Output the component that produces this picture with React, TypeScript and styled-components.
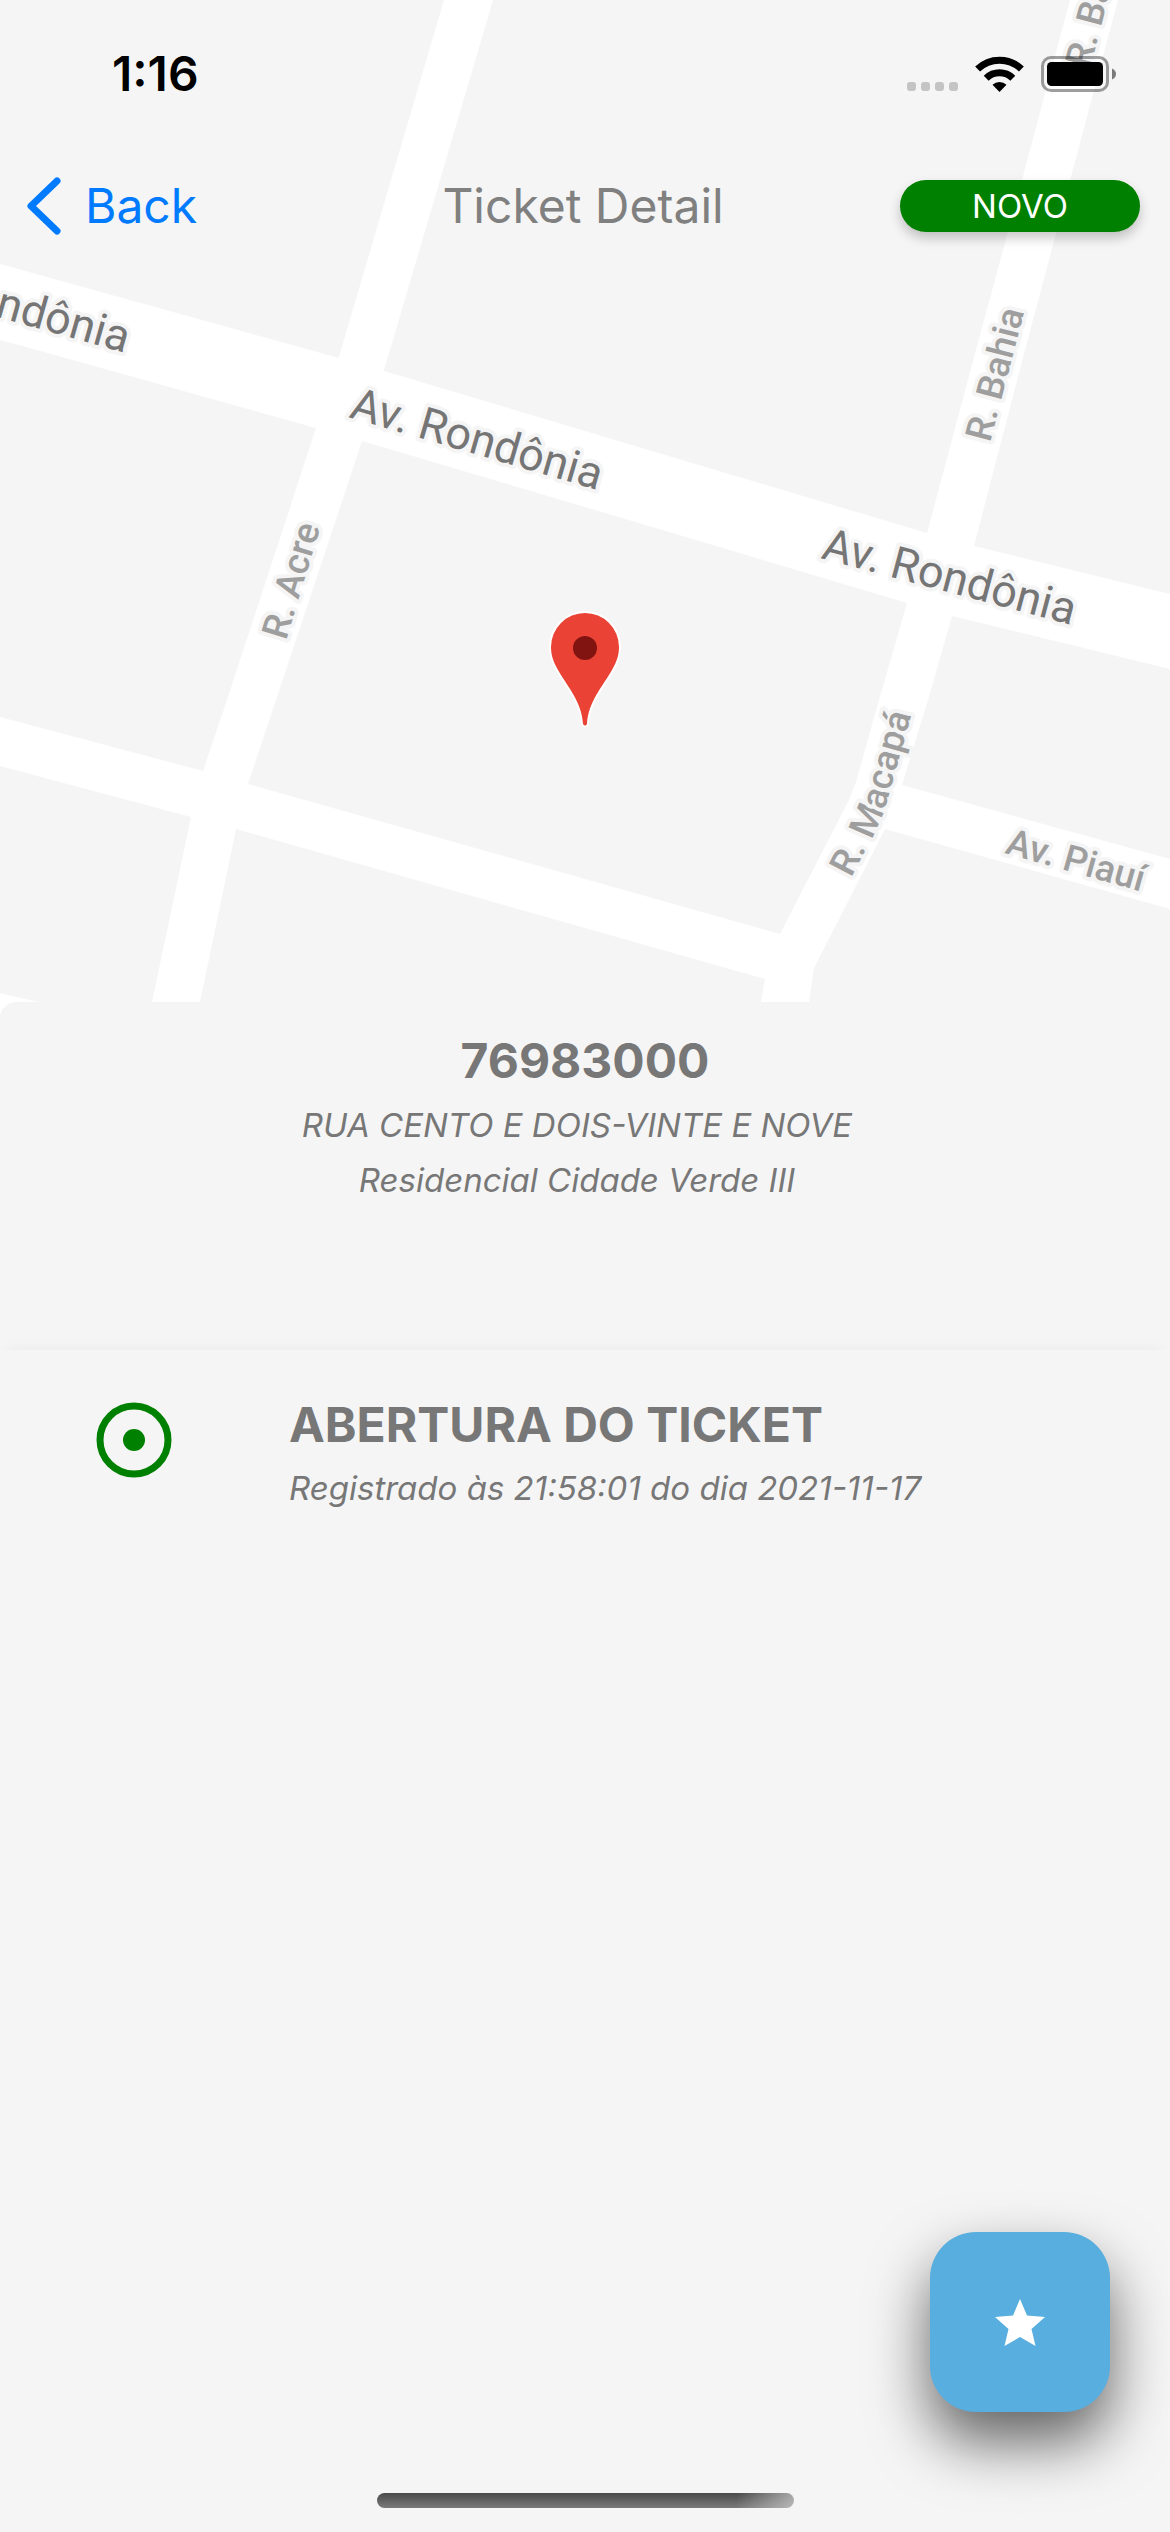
import React from "react";
import styled, { createGlobalStyle } from "styled-components";

const colors = {
  surface: "#f5f5f5",
  road: "#ffffff",
  text: "#777777",
  title: "#808080",
  link: "#007aff",
  open: "#008000",
  action: "#58aedf",
};

const GlobalStyle = createGlobalStyle`
  *, *::before, *::after { box-sizing: border-box; }
  html, body { margin: 0; background: ${colors.surface}; }
  body { font-family: Inter, "Liberation Sans", sans-serif; color: ${colors.text}; }
  h1, h2, h3, p, ul { margin: 0; padding: 0; }
`;

const Screen = styled.div`
  position: relative;
  display: flex;
  flex-direction: column;
  min-height: 100vh;
  overflow: hidden;
  background: ${colors.surface};
`;

const MapArea = styled.header`
  position: relative;
  min-height: 1020px;
`;

const MapCanvas = styled.svg`
  position: absolute;
  inset: 0;
  width: 100%;
  height: 100%;
`;

const RoadLabel = styled.text<{ $major?: boolean }>`
  font-family: Roboto, Inter, sans-serif;
  font-size: ${(p) => (p.$major ? 45 : 37)}px;
  font-weight: ${(p) => (p.$major ? 400 : 500)};
  fill: ${(p) => (p.$major ? "#757575" : "#9e9e9e")};
  stroke: ${colors.surface};
  stroke-width: 8px;
  stroke-linejoin: round;
  paint-order: stroke;
`;

const StatusBar = styled.div`
  position: relative;
  display: flex;
  justify-content: space-between;
  align-items: center;
  height: 148px;
  padding: 0 54px 0 112px;
`;

const Clock = styled.time`
  font-size: 48px;
  line-height: 56px;
  font-weight: 600;
  color: #000;
`;

const StatusIcons = styled.div`
  display: flex;
  align-items: center;
  gap: 17px;
`;

const SignalDots = styled.div`
  display: flex;
  gap: 5px;
  padding-top: 25px;
`;

const Dot = styled.span`
  width: 9px;
  height: 9px;
  border-radius: 3px;
  background: #c4c4c4;
`;

const NavBar = styled.nav`
  position: relative;
  display: grid;
  grid-template-columns: 1fr auto 1fr;
  align-items: center;
  height: 116px;
  padding: 0 30px 0 26px;
`;

const BackButton = styled.button`
  display: flex;
  align-items: center;
  justify-self: start;
  gap: 24px;
  padding: 0;
  border: 0;
  background: none;
  font: inherit;
  font-size: 48px;
  line-height: 60px;
  color: ${colors.link};
  cursor: pointer;
`;

const NavTitle = styled.h1`
  font-size: 48px;
  line-height: 60px;
  font-weight: 400;
  color: ${colors.title};
`;

const Badge = styled.span`
  justify-self: end;
  width: 240px;
  border-radius: 26px;
  background: ${colors.open};
  box-shadow: 0 6px 12px rgba(0, 0, 0, 0.22);
  color: #fff;
  font-size: 33px;
  line-height: 52px;
  text-align: center;
`;

const Sheet = styled.main`
  position: relative;
  display: flex;
  flex-direction: column;
  flex: 1;
  margin-top: -18px;
  border-radius: 16px 16px 0 0;
  background: ${colors.surface};
`;

const Address = styled.section`
  display: flex;
  flex-direction: column;
  min-height: 348px;
  padding-top: 28px;
  text-align: center;
`;

const Heading = styled.h2`
  font-size: 48px;
  line-height: 62px;
  font-weight: 700;
`;

const Detail = styled.p`
  font-size: 33px;
  line-height: 55px;
  font-style: italic;
`;

const AddressLines = styled.div`
  padding-top: 6px;
  padding-right: 16px;
`;

const Timeline = styled.ul`
  flex: 1;
  list-style: none;
  background: ${colors.surface};
  box-shadow: 0 -8px 16px -8px rgba(0, 0, 0, 0.05);
`;

const Event = styled.li`
  display: flex;
  align-items: flex-start;
  gap: 113px;
  padding: 44px 40px 0 92px;
`;

const EventText = styled.div`
  display: flex;
  flex-direction: column;
  gap: 5px;
`;

const EventIcon = styled.svg`
  flex: none;
  margin-top: 4px;
`;

const Fab = styled.button`
  position: absolute;
  right: 60px;
  bottom: 120px;
  display: flex;
  align-items: center;
  justify-content: center;
  width: 180px;
  height: 180px;
  padding: 0;
  border: 0;
  border-radius: 46px;
  background: ${colors.action};
  box-shadow: 0 30px 60px rgba(0, 0, 0, 0.6);
  cursor: pointer;
`;

const HomeIndicator = styled.div`
  align-self: center;
  width: 417px;
  height: 15px;
  margin-bottom: 24px;
  border-radius: 8px;
  background: linear-gradient(100deg, transparent 86%, rgba(210, 210, 210, 0.7) 100%),
    linear-gradient(#4a4a4a, #7a7a7a);
`;

const roads = [
  "444,0 341,350 316,428 227,700 203,771 191,817 152,1002 149,1020 197,1020 200,1002 236,829 248,784 276,700 362,441 390,350 493,0",
  "0,264 310,350 339,358 384,371 585,431 927,533 974,546 1170,594 1170,669 952,616 907,603 585,507 362,441 316,428 37,350 0,340",
  "0,717 203,771 248,784 585,879 780,934 790,986 765,979 585,928 236,829 191,817 0,766",
  "1070,0 1022,180 976,350 927,533 907,603 879,700 856,782 849,800 780,934 765,979 761,1002 759,1020 806,1020 809,1002 814,968 885,829 902,785 928,700 952,616 974,546 1025,350 1118,0",
  "895,783 902,785 1170,859 1170,909 885,829",
  "0,993 38,1002 110,1020 0,1020",
];

type Label = { text: string; x: number; y: number; angle: number; major?: boolean; end?: boolean };

const straightLabels: Label[] = [
  { text: "Av. Rondônia", x: 348, y: 417, angle: 16.3, major: true },
  { text: "Av. Rondônia", x: 820, y: 558, angle: 14.9, major: true },
  { text: "Av. Rondônia", x: 125, y: 353, angle: 15.8, major: true, end: true },
  { text: "R. Acre", x: 286, y: 641, angle: -73.2 },
  { text: "R. Bahia", x: 990, y: 443, angle: -75.4 },
  { text: "R. Bahia", x: 1090, y: 69, angle: -75.4 },
  { text: "Av. Piauí", x: 1004, y: 853, angle: 15.7 },
];

function StreetMap() {
  return (
    <MapCanvas viewBox="0 0 1170 1020" preserveAspectRatio="xMidYMid slice" role="img" aria-label="Map">
      {roads.map((points) => (
        <polygon key={points} points={points} fill={colors.road} />
      ))}
      {straightLabels.map((l) => (
        <RoadLabel
          key={`${l.x}`}
          $major={l.major}
          textAnchor={l.end ? "end" : "start"}
          transform={`translate(${l.x} ${l.y}) rotate(${l.angle})`}
        >
          {l.text}
        </RoadLabel>
      ))}
      <path id="macapa" d="M851 878 L874 834 Q882 818 887 801 L927 660" fill="none" />
      <RoadLabel>
        <textPath href="#macapa">R. Macapá</textPath>
      </RoadLabel>
      <path
        d="M551 647a34 34 0 0 1 68 0c0 9-3 16-7 23-9 16-24 32-25 54q-2 3-4 0c-1-22-16-38-25-54-4-7-7-14-7-23z"
        fill="#ea4335"
        stroke="#fff"
        strokeWidth="4"
        paintOrder="stroke"
      />
      <circle cx="585" cy="648" r="12" fill="#811411" />
    </MapCanvas>
  );
}

function WifiIcon() {
  return (
    <svg width="49" height="36" viewBox="0 0 49 36" aria-hidden="true">
      <g fill="none" stroke="#000" strokeWidth="7">
        <path d="M2.6 13a31.500 31.500 0 0 1 43.800 0" />
        <path d="M11.200 22.300a19 19 0 0 1 26.600 0" />
      </g>
      <path d="M24.500 36l-7-7.200a10 10 0 0 1 14 0z" fill="#000" />
    </svg>
  );
}

function BatteryIcon() {
  return (
    <svg width="75" height="36" viewBox="0 0 75 36" aria-hidden="true">
      <rect x="1.5" y="1.5" width="65" height="33" rx="8.500" fill="none" stroke="#000" strokeOpacity="0.38" strokeWidth="3" />
      <rect x="6" y="6" width="56" height="24" rx="4.500" fill="#000" />
      <path d="M71 12.500q4 2 4 5.500t-4 5.500z" fill="#000" fillOpacity="0.5" />
    </svg>
  );
}

export default function App() {
  return (
    <>
      <GlobalStyle />
      <Screen>
        <MapArea>
          <StreetMap />
          <StatusBar>
            <Clock>1:16</Clock>
            <StatusIcons>
              <SignalDots>
                <Dot />
                <Dot />
                <Dot />
                <Dot />
              </SignalDots>
              <WifiIcon />
              <BatteryIcon />
            </StatusIcons>
          </StatusBar>
          <NavBar>
            <BackButton type="button">
              <svg width="35" height="58" viewBox="0 0 35 58" fill="none" aria-hidden="true">
                <path d="M31 4L5 29l26 25" stroke={colors.link} strokeWidth="7" strokeLinecap="round" strokeLinejoin="round" />
              </svg>
              Back
            </BackButton>
            <NavTitle>Ticket Detail</NavTitle>
            <Badge>NOVO</Badge>
          </NavBar>
        </MapArea>
        <Sheet>
          <Address>
            <Heading>76983000</Heading>
            <AddressLines>
              <Detail>RUA CENTO E DOIS-VINTE E NOVE</Detail>
              <Detail>Residencial Cidade Verde III</Detail>
            </AddressLines>
          </Address>
          <Timeline>
            <Event>
              <EventIcon width="84" height="84" viewBox="0 0 84 84" aria-hidden="true">
                <circle cx="42" cy="42" r="34" fill="none" stroke={colors.open} strokeWidth="7" />
                <circle cx="42" cy="42" r="11" fill={colors.open} />
              </EventIcon>
              <EventText>
                <Heading as="h3">ABERTURA DO TICKET</Heading>
                <Detail>Registrado às 21:58:01 do dia 2021-11-17</Detail>
              </EventText>
            </Event>
          </Timeline>
        </Sheet>
        <Fab type="button" aria-label="Favorite">
          <svg width="50" height="47" viewBox="0 0 50 47" aria-hidden="true">
            <path d="M25 0l7 16.500 18 1.500-13.500 12L40.500 47 25 38 9.500 47l4-17L0 18l18-1.500z" fill="#fff" />
          </svg>
        </Fab>
        <HomeIndicator />
      </Screen>
    </>
  );
}
